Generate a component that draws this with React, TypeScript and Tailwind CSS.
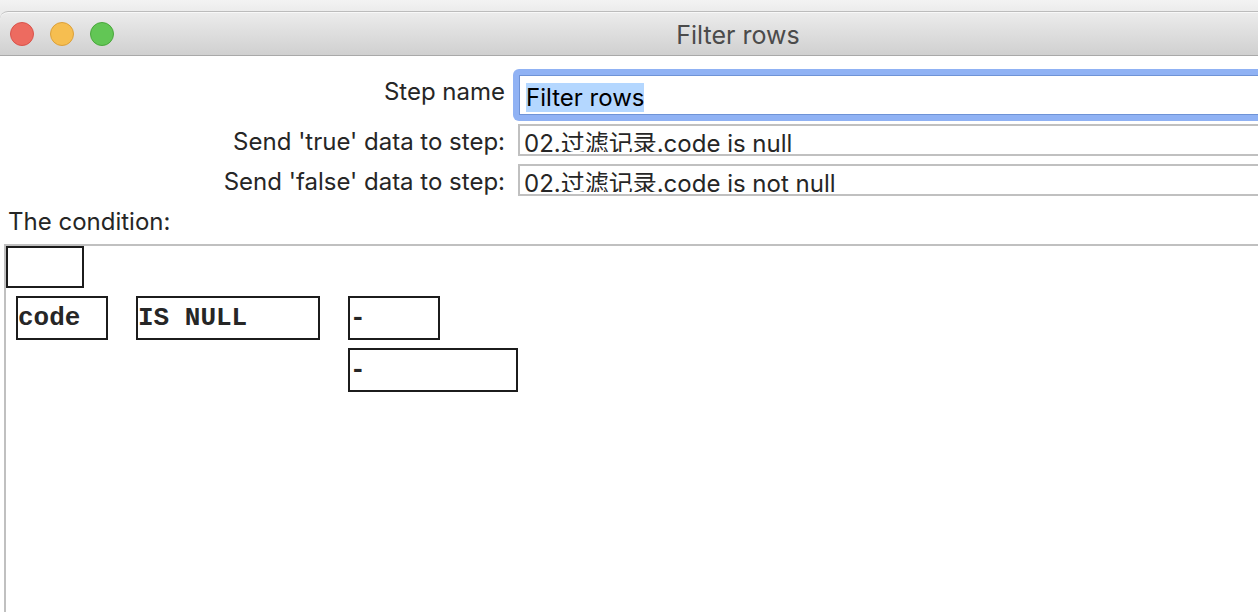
import { useEffect, useRef } from "react";

const lights = [
  { label: "Close", style: "border-[#d9534b] bg-[#ed6b60]" },
  { label: "Minimize", style: "border-[#dca03a] bg-[#f6be50]" },
  { label: "Zoom", style: "border-[#4aa73c] bg-[#62c655]" },
];

function TitleBar() {
  return (
    <header className="grid h-[45px] grid-cols-[1fr_auto_1fr] items-center rounded-tl-lg border-y border-t-[#bcbcbc] border-b-[#a9a9a9] bg-linear-to-b from-[#ececec] to-[#d0d0d0] px-2.5 shadow-[inset_0_1px_0_#f8f8f8]">
      <div className="flex gap-4">
        {lights.map((light) => (
          <button
            key={light.label}
            type="button"
            aria-label={light.label}
            className={`size-6 rounded-full border ${light.style}`}
          />
        ))}
      </div>
      <h1 className="pt-0.5 text-[25px] leading-8 text-[#4b4b4b]">Filter rows</h1>
    </header>
  );
}

function StepSelect({ id, label, value }: { id: string; label: string; value: string }) {
  return (
    <div className="flex h-10 items-start">
      <label htmlFor={id} className="w-[505px] shrink-0 pt-0.5 text-right leading-8">
        {label}
      </label>
      <div className="ml-[13px] h-8 grow border-2 border-[#c0c0c0] bg-white">
        <div className="h-[26px] overflow-hidden">
          <select
            id={id}
            defaultValue={value}
            className="block h-9 w-full appearance-none bg-white pl-1 leading-9 outline-none"
          >
            <option>{value}</option>
          </select>
        </div>
      </div>
    </div>
  );
}

function Cell({ text, label, size }: { text: string; label?: string; size: string }) {
  return (
    <button
      type="button"
      aria-label={label}
      className={`shrink-0 border-2 border-[#1c1c1c] bg-white text-left font-['Liberation_Mono',monospace] text-[26px] leading-10 font-bold ${size}`}
    >
      {text}
    </button>
  );
}

export default function App() {
  const nameRef = useRef<HTMLInputElement>(null);

  useEffect(() => {
    nameRef.current?.focus({ preventScroll: true });
    nameRef.current?.select();
  }, []);

  return (
    <div className="min-h-screen overflow-clip bg-linear-to-b from-[#f3f3f3] to-[#ececec] to-[11px] pt-[11px] font-['Inter','Noto_Sans_CJK_SC',sans-serif] text-2xl text-[#262626]">
      <main className="flex min-h-[calc(100vh-11px)] w-[calc(100%+218px)] flex-col rounded-tl-lg bg-white">
        <TitleBar />
        <form className="flex grow flex-col pt-[13px]">
          <div className="flex h-[55px] items-start">
            <label htmlFor="step-name" className="w-[505px] shrink-0 pt-[7px] text-right leading-8">
              Step name
            </label>
            <div className="ml-2 flex grow rounded-md bg-[#90b2f4] p-1.5">
              <input
                id="step-name"
                ref={nameRef}
                type="text"
                defaultValue="Filter rows"
                className="h-10 grow border border-[#6f93d6] bg-white pt-1 pl-1.5 leading-8 text-black outline-none selection:bg-[#b3d7ff]/99 selection:text-black"
              />
            </div>
          </div>
          <StepSelect id="true-step" label="Send 'true' data to step:" value="02.过滤记录.code is null" />
          <StepSelect id="false-step" label="Send 'false' data to step:" value="02.过滤记录.code is not null" />
          <h2 className="pb-1 pl-2 leading-9">The condition:</h2>
          <section
            aria-label="Condition"
            className="ml-1 flex grow flex-col items-start gap-2 border-t-2 border-l-2 border-[#c0c0c0]"
          >
            <Cell text="" label="Negate condition" size="h-[42px] w-[78px]" />
            <div className="grid grid-cols-[92px_184px_auto] gap-x-7 gap-y-2 pl-2.5">
              <Cell text="code" size="h-11 w-[92px]" />
              <Cell text="IS NULL" size="h-11 w-[184px]" />
              <Cell text="-" label="Field" size="h-11 w-[92px]" />
              <div className="col-start-3 flex">
                <Cell text="-" label="Value" size="h-11 w-[170px]" />
              </div>
            </div>
          </section>
        </form>
      </main>
    </div>
  );
}
